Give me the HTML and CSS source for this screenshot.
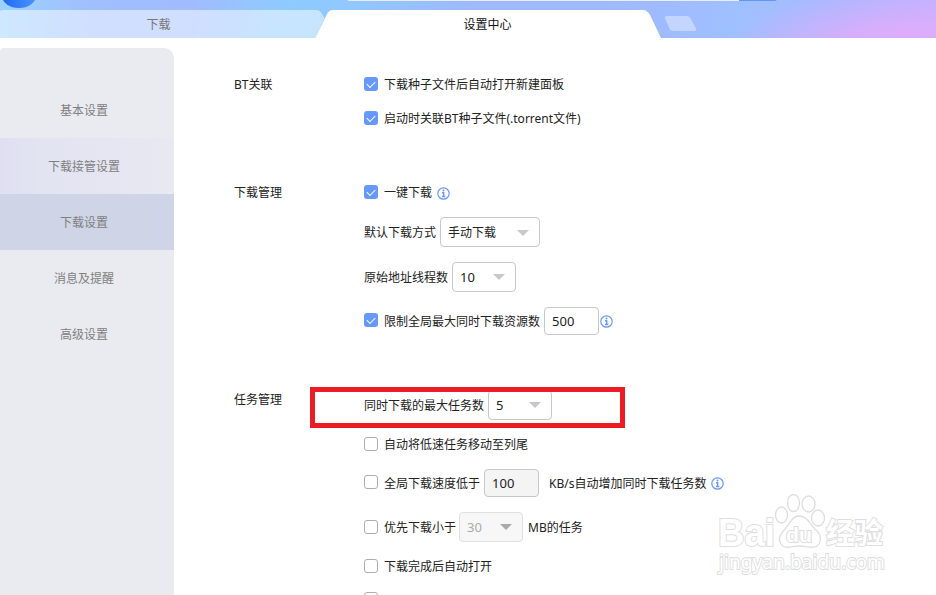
FILE: index.html
```
<!DOCTYPE html>
<html lang="zh-CN">
<head>
  <meta charset="UTF-8">
  <title>设置中心</title>
  <link rel="stylesheet" href="styles.css">
</head>
<body>
  <svg class="defs" width="0" height="0">
    <symbol id="info" viewBox="0 0 13 13">
      <circle cx="6.5" cy="6.5" r="5.7" fill="none" stroke="#6699ff" stroke-width="1.2"/>
      <circle cx="6.5" cy="3.5" r="1" fill="#6699ff"/>
      <path d="M5 5.7h1.700v4M4.900 9.500h3.400" fill="none" stroke="#6699ff" stroke-width="1.4"/>
    </symbol>
  </svg>

  <header class="header">
    <svg class="tab-shapes" width="936" height="38" viewBox="0 0 936 38">
      <defs>
        <linearGradient id="logo" x1="0" x2="1">
          <stop offset="0" stop-color="#1f66f5"/>
          <stop offset="1" stop-color="#4a94fb"/>
        </linearGradient>
      </defs>
      <ellipse cx="19" cy="-4" rx="17" ry="12" fill="url(#logo)"/>
      <path d="M347 0H739V1H350Q348 1 347 0Z" fill="#e6eeff"/>
      <path d="M739 0H777L775 1H739Z" fill="#5f96fb"/>
      <path d="M0 11Q1 10 3 10H316Q320 10 322 14L324.500 18L316 38H0Z" fill="#fff" fill-opacity="0.5"/>
      <path d="M315.500 38L327 14Q329 10 333 10H643Q647 10 650 15L661 38Z" fill="#fff"/>
      <path d="M667 16H687Q689 16 690 17.500L696 28.500Q697 31 694.500 31H673Q671 31 670 29.500L665.300 19Q664 16 667 16Z" fill="#fff" fill-opacity="0.38"/>
    </svg>
    <nav class="tabs">
      <span class="tab">下载</span>
      <span class="tab active">设置中心</span>
    </nav>
  </header>

  <div class="main">
    <aside class="sidebar">
      <div class="menu-item">基本设置</div>
      <div class="menu-item hover">下载接管设置</div>
      <div class="menu-item active">下载设置</div>
      <div class="menu-item">消息及提醒</div>
      <div class="menu-item">高级设置</div>
    </aside>

    <div class="content">
      <section class="group bt">
        <h3>BT关联</h3>
        <div class="rows">
          <div class="row h34"><span class="check on"></span><label>下载种子文件后自动打开新建面板</label></div>
          <div class="row h34"><span class="check on"></span><label>启动时关联BT种子文件(.torrent文件)</label></div>
        </div>
      </section>

      <section class="group download">
        <h3>下载管理</h3>
        <div class="rows">
          <div class="row h38"><span class="check on"></span><label>一键下载</label><svg class="info low"><use href="#info"/></svg></div>
          <div class="row h42"><label>默认下载方式</label><span class="select wide">手动下载</span></div>
          <div class="row h48"><label>原始地址线程数</label><span class="select">10</span></div>
          <div class="row h40"><span class="check on up"></span><label>限制全局最大同时下载资源数</label><span class="input">500</span><svg class="info near"><use href="#info"/></svg></div>
        </div>
      </section>

      <section class="group task">
        <h3>任务管理</h3>
        <div class="rows">
          <div class="row h36"><label>同时下载的最大任务数</label><span class="select">5</span></div>
          <div class="row h42"><span class="check"></span><label>自动将低速任务移动至列尾</label></div>
          <div class="row h36"><span class="check up"></span><label>全局下载速度低于</label><span class="input gray">100</span><label class="unit-kb">KB/s自动增加同时下载任务数</label><svg class="info"><use href="#info"/></svg></div>
          <div class="row h52"><span class="check"></span><label>优先下载小于</label><span class="select disabled">30</span><label class="unit-mb">MB的任务</label></div>
          <div class="row h26"><span class="check"></span><label>下载完成后自动打开</label></div>
          <div class="row h40"><span class="check"></span></div>
        </div>
      </section>
    </div>
  </div>

  <div class="highlight"></div>

  <svg class="watermark" width="190" height="90" viewBox="0 0 190 90">
    <g fill="#fff" stroke="#dedede" stroke-width="1.3">
      <ellipse cx="71.500" cy="25" rx="6" ry="8"/>
      <ellipse cx="83.500" cy="13" rx="6" ry="8.500"/>
      <ellipse cx="98.500" cy="14" rx="6.500" ry="8"/>
      <ellipse cx="108" cy="28" rx="6.500" ry="8"/>
      <path d="M89 26C97 26 99 33 105 39C111 44 112 49 109 54C105 60 97 56 89 56C82 56 75 60 71 54C67 48 71 44 75 39C80 34 82 26 89 26Z"/>
    </g>
    <g class="mark-text">
      <text x="8" y="56" font-size="38" textLength="57" lengthAdjust="spacingAndGlyphs">Bai</text>
      <text x="76" y="52" font-size="20" textLength="26" lengthAdjust="spacingAndGlyphs">du</text>
      <text class="cjk" x="116" y="54" font-size="29" textLength="57" lengthAdjust="spacingAndGlyphs">经验</text>
      <text class="url" x="9" y="79" font-size="20" textLength="166" lengthAdjust="spacingAndGlyphs">jingyan.baidu.com</text>
    </g>
  </svg>
</body>
</html>
```
FILE: styles.css
```
* {
  box-sizing: border-box;
}
body {
  margin: 0;
  height: 595px;
  overflow: hidden;
  position: relative;
  background: #fff;
  color: #222;
  font-family: "Noto Sans", "Noto Sans CJK SC", sans-serif;
  font-size: 12px;
  line-height: 18px;
}
.defs {
  position: absolute;
}

/* header */
.header {
  position: relative;
  height: 38px;
  background:
    radial-gradient(ellipse 170px 55px at 900px 45px, #e2abfb 0%, rgba(226,171,251,0.75) 35%, rgba(210,175,255,0) 100%),
    linear-gradient(100deg, #9cd2ff 0, #a0bfff 90px, #a0bcff 190px, #8ecbff 285px, #90c8ff 340px, #9fb8ff 470px, #9fbaff 640px, #9fc0ff 730px, #a9b9ff 830px, #c4b2ff 936px);
}
.tab-shapes {
  position: absolute;
  left: 0;
  top: 0;
}
.tabs {
  position: relative;
  display: flex;
  padding-top: 10px;
  height: 38px;
}
.tab {
  width: 317px;
  line-height: 30px;
  text-align: center;
  color: #777;
}
.tab.active {
  width: 341px;
  color: #111;
}

/* left menu */
.main {
  display: flex;
  height: 557px;
}
.sidebar {
  width: 174px;
  height: 547px;
  margin-top: 10px;
  padding-top: 34px;
  background: #eaebf0;
  border-radius: 4px 10px 0 0;
}
.menu-item {
  height: 56px;
  padding-right: 6px;
  line-height: 58px;
  text-align: center;
  color: #808080;
}
.menu-item.hover {
  background: linear-gradient(90deg, #dfdff2, #e2e4f1 25%, #e6e6f2 70%, #e7eaf1);
}
.menu-item.active {
  background: #cfd4e7;
}

/* settings */
.content {
  flex: 1;
  padding: 29px 0 0 60px;
}
.group {
  display: flex;
}
.group h3 {
  width: 130px;
  margin: 9px 0 0;
  font-size: 12px;
  font-weight: normal;
}
.group.download {
  margin-top: 38px;
}
.group.download h3 {
  margin-top: 11px;
}
.group.task {
  margin-top: 46px;
}
.group.task h3 {
  margin-top: 4px;
}
.row {
  display: flex;
  align-items: center;
  white-space: nowrap;
}
.row label {
  padding-top: 2px;
}
.h26 { height: 26px; }
.h34 { height: 34px; }
.h36 { height: 36px; }
.h38 { height: 38px; }
.h40 { height: 40px; }
.h42 { height: 42px; }
.h48 { height: 48px; }
.h52 { height: 52px; }

.check {
  width: 14px;
  height: 14px;
  margin-right: 6px;
  border: 1px solid #adadad;
  border-radius: 3px;
  background: #fff;
}
.check.on {
  display: flex;
  justify-content: center;
  border: 0;
  background: #6699ff;
}
.check.on::after {
  content: "";
  width: 7px;
  height: 4px;
  margin-top: 4px;
  border-left: 1px solid #fff;
  border-bottom: 1px solid #fff;
  transform: rotate(-45deg);
}
.check.up {
  margin-bottom: 2px;
}
.select, .input {
  margin-left: 4px;
  padding-left: 7px;
  border: 1px solid #c8c8c8;
  border-radius: 4px;
  font-size: 13px;
}
.select {
  display: flex;
  align-items: center;
  justify-content: space-between;
  width: 64px;
  height: 30px;
  padding-right: 10px;
}
.select.wide {
  width: 100px;
  padding-top: 1px;
  font-size: 12px;
}
.select::after {
  content: "";
  border: 6px solid transparent;
  border-top-color: #c8c8c8;
  border-bottom: 0;
}
.select.disabled {
  margin-left: 3px;
  border-color: #e0e0e0;
  background: #f7f7f7;
  color: #aaa;
}
.select.disabled::after {
  border-top-color: #aaa;
}
.input {
  width: 55px;
  height: 28px;
  line-height: 27px;
}
.input.gray {
  background: #f4f4f4;
}
.unit-kb {
  margin-left: 10px;
}
.unit-mb {
  margin-left: 5px;
}
.info {
  width: 13px;
  height: 13px;
  margin-left: 5px;
}
.info.near {
  margin-left: 1px;
}
.info.low {
  margin-top: 2px;
}

.highlight {
  position: absolute;
  left: 310px;
  top: 387px;
  width: 315px;
  height: 41px;
  border: 5px solid #ed1c24;
}
.watermark {
  position: absolute;
  left: 710px;
  top: 490px;
}
.mark-text {
  fill: #fff;
  stroke: #dedede;
  stroke-width: 2;
  paint-order: stroke;
  font-family: "Liberation Sans", sans-serif;
  font-weight: bold;
}
.mark-text .cjk {
  font-family: "Noto Sans CJK SC", sans-serif;
}
.mark-text .url {
  font-family: "Noto Sans", sans-serif;
  font-weight: normal;
}
```
